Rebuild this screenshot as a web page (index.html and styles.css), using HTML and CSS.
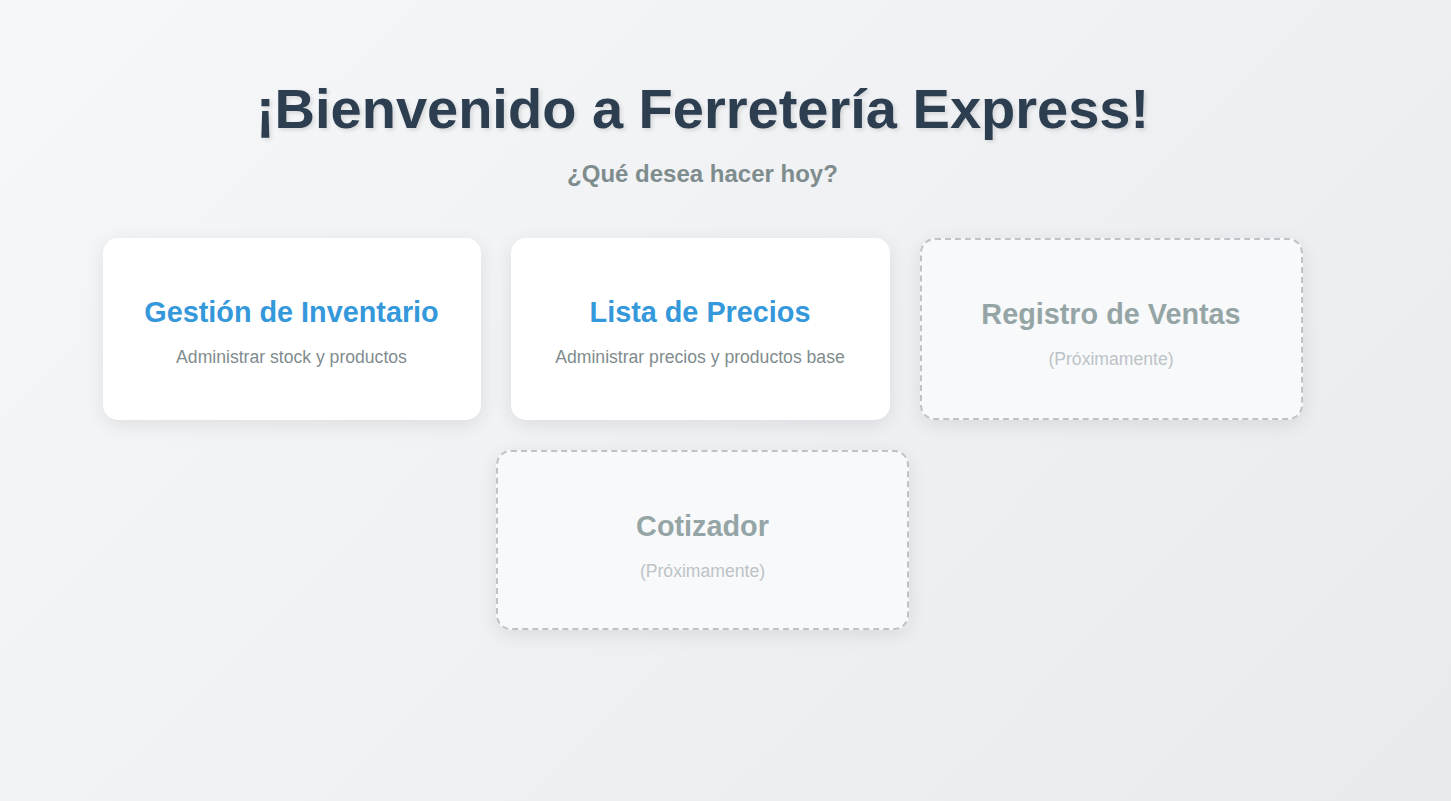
FILE: index.html
```html
<!DOCTYPE html>
<html lang="es">
<head>
<meta charset="utf-8">
<title>Ferretería Express</title>
<link rel="stylesheet" href="styles.css">
</head>
<body>
<div class="page">
  <h1 class="title">¡Bienvenido a Ferretería Express!</h1>
  <p class="subtitle">¿Qué desea hacer hoy?</p>
  <div class="cards">
    <div class="card c1">
      <h3 class="card-title">Gestión de Inventario</h3>
      <p class="card-desc">Administrar stock y productos</p>
    </div>
    <div class="card c2">
      <h3 class="card-title">Lista de Precios</h3>
      <p class="card-desc">Administrar precios y productos base</p>
    </div>
    <div class="card soon c3">
      <h3 class="card-title">Registro de Ventas</h3>
      <p class="card-desc">(Próximamente)</p>
    </div>
    <div class="card soon c4">
      <h3 class="card-title">Cotizador</h3>
      <p class="card-desc">(Próximamente)</p>
    </div>
  </div>
</div>
</body>
</html>
```

FILE: styles.css
```css
html, body {
  margin: 0;
  padding: 0;
  height: 100%;
}
body {
  font-family: "Liberation Sans", Arial, sans-serif;
  background: linear-gradient(135deg, #f6f7f9 0%, #e8ebee 100%);
  min-height: 801px;
}
.page {
  width: 1405px;
  display: flex;
  flex-direction: column;
  align-items: center;
}
.title {
  margin: 77px 0 0;
  font-size: 56px;
  font-weight: bold;
  line-height: 63px;
  color: #2c3e50;
  text-shadow: 2px 2px 4px rgba(0, 0, 0, 0.12);
}
.subtitle {
  margin: 20px 0 0;
  font-size: 24px;
  font-weight: bold;
  line-height: 28px;
  color: #7f8c8d;
}
.cards {
  margin-top: 50px;
  width: 1200px;
  display: flex;
  flex-wrap: wrap;
  justify-content: center;
  gap: 30px;
}
.card {
  box-sizing: border-box;
  background: #ffffff;
  border-radius: 15px;
  box-shadow: 0 5px 20px rgba(0, 0, 0, 0.09);
  padding: 58px 20px 53px;
  text-align: center;
}
.c1 { width: 378px; }
.c2 { width: 379px; }
.c3 { width: 383px; }
.card-title {
  margin: 0 0 18px;
  font-size: 28.8px;
  font-weight: bold;
  line-height: 33px;
  color: #3498db;
}
.card-desc {
  margin: 0;
  font-size: 17.6px;
  line-height: 20px;
  color: #7f8c8d;
}
.soon {
  background: #f8f9fa;
  border: 2px dashed #bdc3c7;
  padding-bottom: 49px;
}
.c4 { width: 413px; padding-bottom: 47px; }
.soon .card-title {
  color: #95a5a6;
}
.soon .card-desc {
  color: #bdc3c7;
}
```
